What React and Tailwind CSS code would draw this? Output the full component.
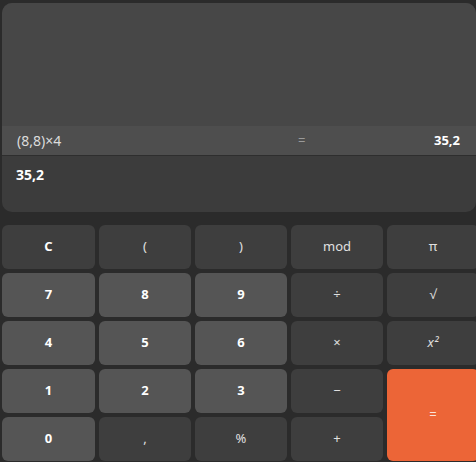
import React from 'react';

const keys = [
  { label: 'C', kind: 'op', bold: true },
  { label: '(', kind: 'op' },
  { label: ')', kind: 'op' },
  { label: 'mod', kind: 'op' },
  { label: 'π', kind: 'op' },
  { label: '7', kind: 'num' },
  { label: '8', kind: 'num' },
  { label: '9', kind: 'num' },
  { label: '÷', kind: 'op' },
  { label: '√', kind: 'op' },
  { label: '4', kind: 'num' },
  { label: '5', kind: 'num' },
  { label: '6', kind: 'num' },
  { label: '×', kind: 'op' },
  { label: 'x²', kind: 'op', italic: true },
  { label: '1', kind: 'num' },
  { label: '2', kind: 'num' },
  { label: '3', kind: 'num' },
  { label: '−', kind: 'op' },
  { label: '=', kind: 'eq' },
  { label: '0', kind: 'num' },
  { label: ',', kind: 'op' },
  { label: '%', kind: 'op' },
  { label: '+', kind: 'op' },
];

function Key({ k }) {
  const base = 'flex items-center justify-center rounded-[6px] text-[13px] select-none';
  if (k.kind === 'eq') {
    return (
      <button className={`${base} row-span-2 bg-[#ec6537] text-[#fbe3da]`}>=</button>
    );
  }
  if (k.kind === 'num') {
    return (
      <button className={`${base} bg-[#555555] text-white font-bold`}>{k.label}</button>
    );
  }
  return (
    <button
      className={`${base} bg-[#3e3e3e] ${k.bold ? 'text-white font-bold' : 'text-[#e0e0e0]'} ${k.italic ? 'italic' : ''}`}
    >
      {k.label}
    </button>
  );
}

export default function App() {
  return (
    <div
      className="w-[476px] h-[462px] overflow-hidden bg-[#2b2b2b] pl-[2px] pt-[3px]"
      style={{ fontFamily: '"Noto Sans", "Open Sans", sans-serif' }}
    >
      <div className="w-[474px] h-[209px] rounded-[10px] overflow-hidden flex flex-col bg-[#3c3c3c]">
        <div className="h-[123px] bg-[#474747]" />
        <div className="h-[30px] bg-[#4e4e4e] border-b border-[#2e2e2e] flex items-center pl-[15px] pr-[16px]">
          <span className="w-[281px] text-[14px] text-[#dcdcdc]">(8,8)×4</span>
          <span className="text-[13px] text-[#9a9a9a]">=</span>
          <span className="flex-1 text-right text-[13px] text-white font-bold">35,2</span>
        </div>
        <div className="flex-1 pl-[14px] pt-[6px]">
          <span className="text-[14px] text-white font-bold">35,2</span>
        </div>
      </div>
      <div className="mt-[13px] grid grid-cols-[93px_92px_92px_92px_92px] grid-rows-[44px_44px_44px_44px_44px] gap-[4px] w-[480px]">
        {keys.map((k) => (
          <Key key={k.label} k={k} />
        ))}
      </div>
    </div>
  );
}
